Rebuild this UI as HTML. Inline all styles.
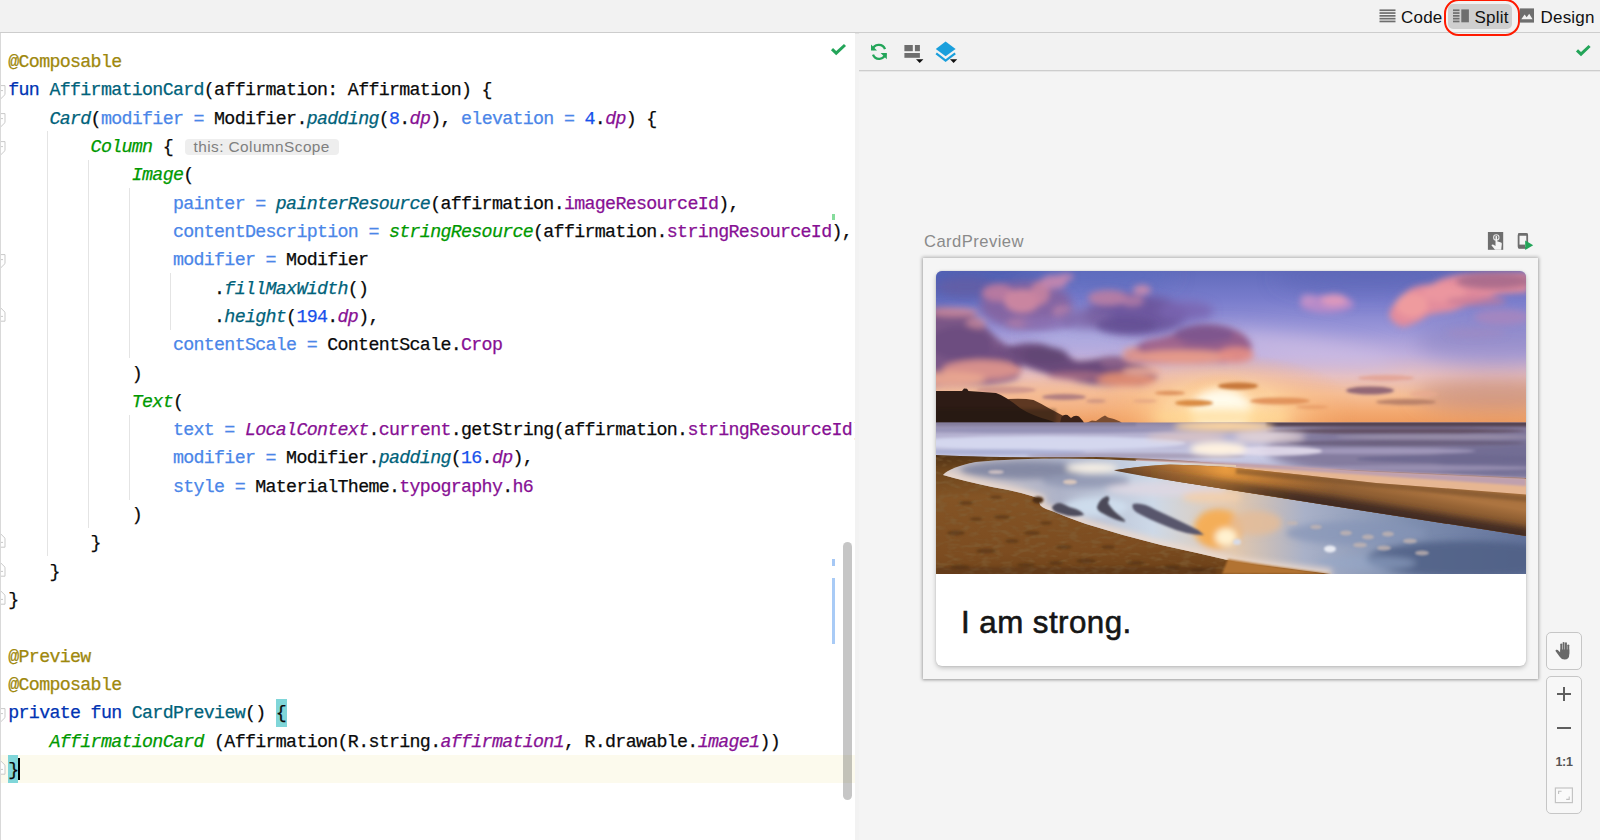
<!DOCTYPE html>
<html>
<head>
<meta charset="utf-8">
<title>Android Studio – Split</title>
<style>
html,body{margin:0;padding:0;}
body{width:1600px;height:840px;overflow:hidden;background:#f2f2f2;font-family:"Liberation Sans",sans-serif;position:relative;}
.abs{position:absolute;}
/* top bar */
#topbar{left:0;top:0;width:1600px;height:32px;background:#f2f2f2;}
#topline{left:0;top:32px;width:1600px;height:1px;background:#cdcdcd;box-shadow:0 1px 0 rgba(0,0,0,.06);}
.tab{position:absolute;top:1.8px;height:32px;font-size:17px;color:#111;line-height:32px;letter-spacing:0.2px;}
/* editor */
#editor{left:0;top:33px;width:855px;height:807px;background:#fff;overflow:hidden;}
#leftline{left:0;top:33px;width:1px;height:807px;background:#d9d9d9;}
#code{position:absolute;left:8.3px;top:15.1px;font-family:"Liberation Mono",monospace;font-size:18.3px;letter-spacing:-0.682px;line-height:28.32px;color:#0a0a0a;white-space:pre;-webkit-text-stroke:0.25px currentColor;}
#code div{height:28.32px;}
.an{color:#9e880d;}
.kw{color:#0033b3;}
.fn{color:#00627a;}
.fi{color:#00627a;font-style:italic;}
.na{color:#4a86e8;}
.nu{color:#1750eb;}
.pr{color:#871094;}
.pi{color:#871094;font-style:italic;}
.co{color:#009900;font-style:italic;}
.hint{display:inline-block;font-family:"Liberation Sans",sans-serif;font-style:normal;font-size:15.4px;letter-spacing:0.42px;-webkit-text-stroke:0;color:#7f7f7f;background:#eeeeee;border-radius:4px;height:16.6px;line-height:16.6px;padding:0 9px;vertical-align:0.2px;margin-left:1.3px;}
.guide{position:absolute;width:1px;background:#e4e4e4;}
.fold{position:absolute;left:-5px;width:9px;height:10px;border:1px solid #cfcfcf;background:#fff;border-radius:1px 1px 3px 3px;}
#curline{left:0;top:722px;width:855px;height:28px;background:#fcfaed;}
.brk{position:absolute;background:#80d6d9;}
#caret{left:18px;top:724.6px;width:2px;height:22.8px;background:#000;}
#scroll{left:842.6px;top:508.5px;width:9px;height:258.5px;background:rgba(0,0,0,.225);border-radius:4.5px;}
/* preview */
#preview{left:859px;top:33px;width:741px;height:807px;background:#f4f4f4;}
#ptool{left:859px;top:33px;width:741px;height:37px;background:#f2f2f2;}
#pline{left:859px;top:70px;width:741px;height:1px;background:#cdcdcd;box-shadow:0 1px 0 rgba(0,0,0,.05);}
#plabel{left:924px;top:231.5px;font-size:16.6px;letter-spacing:0.45px;color:#8a8a8a;line-height:20px;}
#frame{left:923px;top:258px;width:615px;height:421px;background:#f5f5f5;box-shadow:0 0 3.5px 1px rgba(0,0,0,.27), 0 1px 2px rgba(0,0,0,.12);}
#card{left:936px;top:271px;width:590px;height:395px;background:#fff;border-radius:6px;box-shadow:0 2px 5px rgba(0,0,0,.22),0 0 2px rgba(0,0,0,.12);overflow:hidden;}
#photo{position:absolute;left:0;top:0;width:590px;height:303px;}
#ctext{position:absolute;left:25px;top:331.6px;font-size:31.3px;letter-spacing:0.45px;color:#151515;line-height:40px;-webkit-text-stroke:0.6px #151515;}
.zbtn{position:absolute;left:1546px;width:34px;background:#f7f7f7;border:1px solid #c6c6c6;border-radius:5px;}
</style>
</head>
<body>
<div id="topbar" class="abs"></div>
<div id="topline" class="abs"></div>

<div id="editor" class="abs">
  <div id="curline" class="abs"></div>
  <div class="brk" style="left:276px;top:666px;width:11px;height:28px;"></div>
  <div class="brk" style="left:8px;top:722px;width:10px;height:28px;"></div>

  <div class="guide" style="left:47px;top:98px;height:425px;"></div>
  <div class="guide" style="left:88px;top:127px;height:368px;"></div>
  <div class="guide" style="left:129px;top:155px;height:170px;"></div>
  <div class="guide" style="left:129px;top:382px;height:85px;"></div>
  <div class="guide" style="left:170px;top:240px;height:57px;"></div>
  <div class="abs" style="left:832px;top:181px;width:3px;height:6px;background:#86dc9c;"></div>
  <div class="abs" style="left:832px;top:526px;width:3px;height:7px;background:#a6c8f5;"></div>
  <div class="abs" style="left:832px;top:545px;width:3px;height:66px;background:#a9cbf6;"></div>
  <svg class="abs" style="left:0;top:51.5px" width="7" height="15" viewBox="0 0 7 15"><path d="M-3 0.6 L5 0.6 L5 9.6 L0.4 14.2 L-3 14.2 Z" fill="#fff" stroke="#c9c9c9" stroke-width="1"/><path d="M0 5.6 L3 5.6" stroke="#c9c9c9" stroke-width="1"/></svg><svg class="abs" style="left:0;top:79.8px" width="7" height="15" viewBox="0 0 7 15"><path d="M-3 0.6 L5 0.6 L5 9.6 L0.4 14.2 L-3 14.2 Z" fill="#fff" stroke="#c9c9c9" stroke-width="1"/><path d="M0 5.6 L3 5.6" stroke="#c9c9c9" stroke-width="1"/></svg><svg class="abs" style="left:0;top:108.1px" width="7" height="15" viewBox="0 0 7 15"><path d="M-3 0.6 L5 0.6 L5 9.6 L0.4 14.2 L-3 14.2 Z" fill="#fff" stroke="#c9c9c9" stroke-width="1"/><path d="M0 5.6 L3 5.6" stroke="#c9c9c9" stroke-width="1"/></svg><svg class="abs" style="left:0;top:221.4px" width="7" height="15" viewBox="0 0 7 15"><path d="M-3 0.6 L5 0.6 L5 9.6 L0.4 14.2 L-3 14.2 Z" fill="#fff" stroke="#c9c9c9" stroke-width="1"/><path d="M0 5.6 L3 5.6" stroke="#c9c9c9" stroke-width="1"/></svg><svg class="abs" style="left:0;top:674.5px" width="7" height="15" viewBox="0 0 7 15"><path d="M-3 0.6 L5 0.6 L5 9.6 L0.4 14.2 L-3 14.2 Z" fill="#fff" stroke="#c9c9c9" stroke-width="1"/><path d="M0 5.6 L3 5.6" stroke="#c9c9c9" stroke-width="1"/></svg><svg class="abs" style="left:0;top:273.5px" width="7" height="15" viewBox="0 0 7 15"><path d="M-3 0.6 L0.4 0.6 L5 5.2 L5 14.2 L-3 14.2 Z" fill="#fff" stroke="#c9c9c9" stroke-width="1"/><path d="M0 9.4 L3 9.4" stroke="#c9c9c9" stroke-width="1"/></svg><svg class="abs" style="left:0;top:499.5px" width="7" height="15" viewBox="0 0 7 15"><path d="M-3 0.6 L0.4 0.6 L5 5.2 L5 14.2 L-3 14.2 Z" fill="#fff" stroke="#c9c9c9" stroke-width="1"/><path d="M0 9.4 L3 9.4" stroke="#c9c9c9" stroke-width="1"/></svg><svg class="abs" style="left:0;top:528.5px" width="7" height="15" viewBox="0 0 7 15"><path d="M-3 0.6 L0.4 0.6 L5 5.2 L5 14.2 L-3 14.2 Z" fill="#fff" stroke="#c9c9c9" stroke-width="1"/><path d="M0 9.4 L3 9.4" stroke="#c9c9c9" stroke-width="1"/></svg><svg class="abs" style="left:0;top:556.5px" width="7" height="15" viewBox="0 0 7 15"><path d="M-3 0.6 L0.4 0.6 L5 5.2 L5 14.2 L-3 14.2 Z" fill="#fff" stroke="#c9c9c9" stroke-width="1"/><path d="M0 9.4 L3 9.4" stroke="#c9c9c9" stroke-width="1"/></svg><svg class="abs" style="left:0;top:726.5px" width="7" height="15" viewBox="0 0 7 15"><path d="M-3 0.6 L0.4 0.6 L5 5.2 L5 14.2 L-3 14.2 Z" fill="#fff" stroke="#c9c9c9" stroke-width="1"/><path d="M0 9.4 L3 9.4" stroke="#c9c9c9" stroke-width="1"/></svg>
  <div id="code"><div><span class="an">@Composable</span></div><div><span class="kw">fun</span> <span class="fn">AffirmationCard</span>(affirmation: Affirmation) {</div><div>    <span class="fi">Card</span>(<span class="na">modifier =</span> Modifier.<span class="fi">padding</span>(<span class="nu">8</span>.<span class="pi">dp</span>), <span class="na">elevation =</span> <span class="nu">4</span>.<span class="pi">dp</span>) {</div><div>        <span class="co">Column</span> { <span class="hint">this: ColumnScope</span></div><div>            <span class="co">Image</span>(</div><div>                <span class="na">painter =</span> <span class="fi">painterResource</span>(affirmation.<span class="pr">imageResourceId</span>),</div><div>                <span class="na">contentDescription =</span> <span class="co">stringResource</span>(affirmation.<span class="pr">stringResourceId</span>),</div><div>                <span class="na">modifier =</span> Modifier</div><div>                    .<span class="fi">fillMaxWidth</span>()</div><div>                    .<span class="fi">height</span>(<span class="nu">194</span>.<span class="pi">dp</span>),</div><div>                <span class="na">contentScale =</span> ContentScale.<span class="pr">Crop</span></div><div>            )</div><div>            <span class="co">Text</span>(</div><div>                <span class="na">text =</span> <span class="pi">LocalContext</span>.<span class="pr">current</span>.getString(affirmation.<span class="pr">stringResourceId</span>)</div><div>                <span class="na">modifier =</span> Modifier.<span class="fi">padding</span>(<span class="nu">16</span>.<span class="pi">dp</span>),</div><div>                <span class="na">style =</span> MaterialTheme.<span class="pr">typography</span>.<span class="pr">h6</span></div><div>            )</div><div>        }</div><div>    }</div><div>}</div><div> </div><div><span class="an">@Preview</span></div><div><span class="an">@Composable</span></div><div><span class="kw">private fun</span> <span class="fn">CardPreview</span>() {</div><div>    <span class="co">AffirmationCard</span> (Affirmation(R.string.<span class="pi">affirmation1</span>, R.drawable.<span class="pi">image1</span>))</div><div>}</div></div>
  <div id="caret" class="abs"></div>
  <div id="scroll" class="abs"></div>
</div>
<div id="leftline" class="abs"></div>

<div id="preview" class="abs"></div>
<div id="ptool" class="abs"></div>
<div id="pline" class="abs"></div>
<div id="plabel" class="abs">CardPreview</div>
<div id="frame" class="abs"></div>
<div id="card" class="abs">
  <!--PHOTO--><svg id="photo" width="590" height="303" viewBox="0 0 590 303" style="position:absolute;left:0;top:0;display:block">
<defs>
 <linearGradient id="sky" x1="0" y1="0" x2="0" y2="1">
  <stop offset="0" stop-color="#626cbc"/>
  <stop offset="0.18" stop-color="#787ccc"/>
  <stop offset="0.38" stop-color="#9a96d8"/>
  <stop offset="0.54" stop-color="#bfaedc"/>
  <stop offset="0.68" stop-color="#e8c0c0"/>
  <stop offset="0.8" stop-color="#f5bf98"/>
  <stop offset="0.91" stop-color="#f3aa72"/>
  <stop offset="1" stop-color="#ee9a5c"/>
 </linearGradient>
 <radialGradient id="sun" cx="0.5" cy="0.5" r="0.5">
  <stop offset="0" stop-color="#fffef6" stop-opacity="1"/>
  <stop offset="0.2" stop-color="#fff4d4" stop-opacity=".98"/>
  <stop offset="0.45" stop-color="#ffd8a0" stop-opacity=".72"/>
  <stop offset="0.72" stop-color="#fbbd80" stop-opacity=".32"/>
  <stop offset="1" stop-color="#f5a76a" stop-opacity="0"/>
 </radialGradient>
 <linearGradient id="sea" x1="0" y1="0" x2="0" y2="1">
  <stop offset="0" stop-color="#8d83a2"/>
  <stop offset="0.2" stop-color="#b4b0cf"/>
  <stop offset="0.6" stop-color="#c8cae4"/>
  <stop offset="1" stop-color="#a59db9"/>
 </linearGradient>
 <linearGradient id="sand" x1="0" y1="0" x2="0.25" y2="1">
  <stop offset="0" stop-color="#4f3115"/>
  <stop offset="0.12" stop-color="#6d451c"/>
  <stop offset="0.35" stop-color="#845425"/>
  <stop offset="0.8" stop-color="#7c4c20"/>
  <stop offset="1" stop-color="#6e4219"/>
 </linearGradient>
 <linearGradient id="stream" x1="0" y1="0" x2="1" y2="0">
  <stop offset="0" stop-color="#cfc6c8"/>
  <stop offset="0.2" stop-color="#aeb3c8"/>
  <stop offset="0.36" stop-color="#cdd9e8"/>
  <stop offset="0.5" stop-color="#e2c8ae"/>
  <stop offset="0.62" stop-color="#a9b1c8"/>
  <stop offset="0.8" stop-color="#7f8fb0"/>
  <stop offset="1" stop-color="#62729a"/>
 </linearGradient>
 <linearGradient id="bar" gradientUnits="userSpaceOnUse" x1="400" y1="206" x2="393" y2="246">
  <stop offset="0" stop-color="#ac7440"/>
  <stop offset="0.22" stop-color="#946234"/>
  <stop offset="0.55" stop-color="#7a512e"/>
  <stop offset="0.85" stop-color="#553824"/>
  <stop offset="1" stop-color="#4a3226"/>
 </linearGradient>
 <radialGradient id="barglow" gradientUnits="userSpaceOnUse" cx="290" cy="196" r="110">
  <stop offset="0" stop-color="#f0a040" stop-opacity=".95"/>
  <stop offset="0.5" stop-color="#d88a38" stop-opacity=".5"/>
  <stop offset="1" stop-color="#c07a30" stop-opacity="0"/>
 </radialGradient>
 <filter id="b1" filterUnits="userSpaceOnUse" x="-60" y="-60" width="710" height="423"><feGaussianBlur stdDeviation="0.8"/></filter>
 <filter id="b2" filterUnits="userSpaceOnUse" x="-60" y="-60" width="710" height="423"><feGaussianBlur stdDeviation="1.8"/></filter>
 <filter id="b3" filterUnits="userSpaceOnUse" x="-60" y="-60" width="710" height="423"><feGaussianBlur stdDeviation="3"/></filter>
 <filter id="b5" filterUnits="userSpaceOnUse" x="-60" y="-60" width="710" height="423"><feGaussianBlur stdDeviation="5"/></filter>
 <filter id="b9" filterUnits="userSpaceOnUse" x="-60" y="-60" width="710" height="423"><feGaussianBlur stdDeviation="10"/></filter>
 <filter id="grain" filterUnits="userSpaceOnUse" x="0" y="180" width="590" height="123">
  <feTurbulence type="fractalNoise" baseFrequency="0.09 0.22" numOctaves="2" seed="7" result="n"/>
  <feColorMatrix in="n" type="matrix" values="0 0 0 0 0.22  0 0 0 0 0.12  0 0 0 0 0.04  0 0 0 -3.2 1.75"/>
 </filter>
 <filter id="cloudtex" filterUnits="userSpaceOnUse" x="0" y="0" width="590" height="153">
  <feTurbulence type="fractalNoise" baseFrequency="0.035 0.06" numOctaves="3" seed="11" result="n"/>
  <feColorMatrix in="n" type="matrix" values="0 0 0 0 0.36  0 0 0 0 0.24  0 0 0 0 0.46  0 0 0 -2.6 1.35"/>
  <feGaussianBlur stdDeviation="1.2"/>
 </filter>
 <clipPath id="sandclip"><path d="M0 184 Q60 187 160 186 Q240 188 300 194 L590 207 L590 303 L0 303 Z"/></clipPath>
 <clipPath id="skyclip"><rect x="0" y="0" width="590" height="152"/></clipPath>
 <clipPath id="all"><rect x="0" y="0" width="590" height="303"/></clipPath>
 <clipPath id="seaclip"><rect x="0" y="151.5" width="590" height="80"/></clipPath>
 <path id="streamPath" d="M7 204 Q14 196 40 191 Q90 186 160 188 L300 194 L300 196 Q230 192 178 199 Q210 205 244 211 Q300 220 384 233 Q480 248 590 265 L590 303 L395 303 Q340 296 300 291 Q262 282 225 274 Q188 265 150 253 Q130 246 116 240 Q100 236 104 228 Q86 221 56 216 Q28 210 7 204 Z"/>
 <linearGradient id="shadfade" gradientUnits="userSpaceOnUse" x1="200" y1="0" x2="360" y2="0"><stop offset="0" stop-color="#3b2820" stop-opacity="0"/><stop offset="1" stop-color="#3b2820" stop-opacity="1"/></linearGradient>
 <clipPath id="barclip"><path d="M178 199.5 Q206 194.5 234 193.4 Q262 194 290 196 Q360 203 440 212 L590 223.4 L590 265 Q480 248 384 233 Q300 219.6 244 211 Q206 205 178 199.5 Z"/></clipPath>
 <clipPath id="streamclip"><path d="M7 204 Q14 196 40 191 Q90 186 160 188 L300 194 L300 196 Q230 192 178 199 Q210 205 244 211 Q300 220 384 233 Q480 248 590 265 L590 303 L395 303 Q340 296 300 291 Q262 282 225 274 Q188 265 150 253 Q130 246 116 240 Q100 236 104 228 Q86 221 56 216 Q28 210 7 204 Z"/></clipPath>
</defs>
<g clip-path="url(#all)">
<!-- SKY -->
<rect x="0" y="0" width="590" height="154" fill="url(#sky)"/>
<g clip-path="url(#skyclip)">
 <g filter="url(#b9)">
  <ellipse cx="20" cy="8" rx="90" ry="26" fill="#4a5cb0" opacity=".7"/>
  <ellipse cx="160" cy="4" rx="80" ry="14" fill="#5a6cc0" opacity=".55"/>
  <ellipse cx="430" cy="6" rx="90" ry="16" fill="#5a62b4" opacity=".5"/>
  <ellipse cx="560" cy="70" rx="80" ry="24" fill="#8680c0" opacity=".5"/>
  <ellipse cx="360" cy="78" rx="100" ry="12" fill="#cdbfe6" opacity=".75" transform="rotate(8 360 78)"/>
  <ellipse cx="150" cy="64" rx="60" ry="12" fill="#b4b4e4" opacity=".7"/>
  <ellipse cx="560" cy="124" rx="80" ry="16" fill="#b98078" opacity=".6"/>
  <ellipse cx="90" cy="128" rx="110" ry="12" fill="#f4b892" opacity=".75"/>
 </g>
 <!-- sun glow -->
 <ellipse cx="287" cy="140" rx="135" ry="58" fill="url(#sun)"/>
 <ellipse cx="286" cy="142" rx="56" ry="40" fill="url(#sun)"/>
 <ellipse cx="285" cy="140" rx="30" ry="22" fill="#fffdf0" opacity=".95" filter="url(#b5)"/>
 <ellipse cx="285" cy="146" rx="70" ry="8" fill="#ffd890" opacity=".7" filter="url(#b5)"/>
 <!-- D: upper-left pink cluster -->
 <g filter="url(#b5)">
  <ellipse cx="90" cy="34" rx="46" ry="24" fill="#84629f" opacity=".9"/>
  <ellipse cx="30" cy="16" rx="30" ry="10" fill="#6a5a9c" opacity=".6"/>
 </g>
 <g filter="url(#b3)">
  <ellipse cx="62" cy="22" rx="16" ry="9" fill="#b87aa0" opacity=".95"/>
  <ellipse cx="86" cy="30" rx="18" ry="12" fill="#cf88a0" opacity=".95"/>
  <ellipse cx="104" cy="22" rx="10" ry="12" fill="#c9849f" opacity=".85"/>
  <ellipse cx="118" cy="11" rx="13" ry="7" fill="#c787ae" opacity=".9"/>
  <ellipse cx="130" cy="6" rx="8" ry="4" fill="#c888b0" opacity=".8"/>
  <ellipse cx="126" cy="40" rx="10" ry="6" fill="#b982aa" opacity=".75"/>
  <ellipse cx="84" cy="52" rx="14" ry="5" fill="#b27ea8" opacity=".7"/>
  <ellipse cx="112" cy="52" rx="26" ry="7" fill="#8a70b2" opacity=".7"/>
 </g>
 <!-- E: upper-mid purple -->
 <g filter="url(#b5)">
  <ellipse cx="200" cy="44" rx="52" ry="20" fill="#6c579d" opacity=".97"/>
  <ellipse cx="250" cy="40" rx="28" ry="10" fill="#7a64b0" opacity=".85"/>
  <ellipse cx="150" cy="48" rx="26" ry="10" fill="#7e66a6" opacity=".8"/>
 </g>
 <g filter="url(#b3)">
  <ellipse cx="172" cy="27" rx="20" ry="8" fill="#b87ea4" opacity=".92"/>
  <ellipse cx="196" cy="30" rx="12" ry="6" fill="#b07aa4" opacity=".85"/>
  <ellipse cx="206" cy="19" rx="9" ry="5" fill="#cc8cac" opacity=".9"/>
  <ellipse cx="190" cy="54" rx="30" ry="8" fill="#5f4c90" opacity=".6"/>
 </g>
 <!-- A: big left -->
 <g filter="url(#b3)">
  <path d="M-10 38 Q14 32 38 44 Q50 56 62 68 Q74 76 84 84 Q90 100 80 108 Q60 116 -10 116 Z" fill="#7a5787"/>
  <ellipse cx="18" cy="41" rx="24" ry="4.5" fill="#cc8a9e" opacity=".85"/>
  <ellipse cx="40" cy="52" rx="10" ry="6" fill="#c98a9c" opacity=".75"/>
  <ellipse cx="24" cy="72" rx="32" ry="17" fill="#6a4b7e" opacity=".8"/>
  <ellipse cx="60" cy="84" rx="16" ry="8" fill="#6a4b7e" opacity=".6"/>
  <ellipse cx="46" cy="99" rx="40" ry="10" fill="#dc948c" opacity=".95"/>
  <ellipse cx="14" cy="108" rx="36" ry="7" fill="#eaa890" opacity=".95"/>
 </g>
 <!-- B: long diagonal -->
 <g filter="url(#b3)">
  <path d="M68 78 Q86 70 106 73 Q124 78 140 90 Q156 90 170 86 Q186 84 196 90 Q214 96 222 106 Q214 115 196 115 Q160 116 130 108 Q100 100 80 92 Z" fill="#694a7a"/>
  <ellipse cx="110" cy="84" rx="22" ry="8" fill="#5f4474" opacity=".7"/>
  <ellipse cx="190" cy="108" rx="30" ry="7" fill="#e08c72" opacity=".95"/>
  <ellipse cx="140" cy="105" rx="28" ry="4" fill="#b07084" opacity=".8"/>
  <ellipse cx="178" cy="92" rx="14" ry="5" fill="#9a6a90" opacity=".7"/>
 </g>
 <!-- C: centre -->
 <g filter="url(#b3)">
  <path d="M188 90 Q196 74 212 69 Q236 66 250 56 Q270 50 292 56 Q312 62 316 76 Q312 92 280 92 Q240 94 188 92 Z" fill="#955f8c"/>
  <ellipse cx="268" cy="63" rx="30" ry="9" fill="#7c558e" opacity=".9"/>
  <ellipse cx="228" cy="74" rx="20" ry="6" fill="#a66a8e" opacity=".7"/>
  <ellipse cx="246" cy="86" rx="52" ry="7" fill="#e89c8a" opacity=".95"/>
  <ellipse cx="300" cy="84" rx="18" ry="8" fill="#e48e84" opacity=".9"/>
  <ellipse cx="206" cy="100" rx="20" ry="5" fill="#f0b09a" opacity=".8"/>
  <ellipse cx="196" cy="84" rx="10" ry="8" fill="#e0988e" opacity=".8"/>
 </g>
 <!-- right big pink -->
 <g filter="url(#b3)">
  <path d="M453 43 Q457 31 470 21 Q478 14 496 13 Q506 6 524 4 L592 2 L592 21 Q574 22 562 23 Q544 30 516 40 Q500 42 492 44 Q482 52 467 56 Q455 53 453 43 Z" fill="#e38c9c"/>
  <ellipse cx="476" cy="34" rx="16" ry="12" fill="#f09c9e" opacity=".9"/>
  <ellipse cx="508" cy="22" rx="22" ry="9" fill="#ec98a0" opacity=".8"/>
  <ellipse cx="540" cy="30" rx="30" ry="5" fill="#c67a98" opacity=".7"/>
 </g>
 <g filter="url(#b3)">
  <ellipse cx="558" cy="10" rx="38" ry="8" fill="#a2688a" opacity=".85"/>
  <ellipse cx="566" cy="46" rx="28" ry="8" fill="#ac84ba" opacity=".7"/>
  <ellipse cx="540" cy="62" rx="30" ry="5" fill="#a48ac0" opacity=".5"/>
  <ellipse cx="391" cy="33" rx="27" ry="9" fill="#c08cc8" opacity=".85"/>
  <ellipse cx="398" cy="29" rx="13" ry="6" fill="#e29aba" opacity=".9"/>
  <ellipse cx="372" cy="28" rx="8" ry="5" fill="#c894c8" opacity=".7"/>
 </g>
 <!-- horizon streak clouds -->
 <g filter="url(#b2)">
  <ellipse cx="302" cy="115" rx="20" ry="3.4" fill="#c8783a"/>
  <ellipse cx="258" cy="132" rx="19" ry="3.2" fill="#d98a42"/>
  <ellipse cx="234" cy="122" rx="15" ry="2.2" fill="#da8c56" opacity=".9"/>
  <ellipse cx="344" cy="130" rx="30" ry="3.4" fill="#e0905a" opacity=".95"/>
  <ellipse cx="434" cy="119.5" rx="24" ry="4" fill="#8c6274" opacity=".95"/>
  <ellipse cx="470" cy="131" rx="30" ry="3" fill="#b07a64" opacity=".85"/>
  <ellipse cx="450" cy="107" rx="28" ry="3" fill="#e2a090" opacity=".8"/>
  <ellipse cx="488" cy="123" rx="14" ry="3" fill="#e8aa90" opacity=".7"/>
  <ellipse cx="128" cy="126" rx="22" ry="3" fill="#a8787e" opacity=".9"/>
  <ellipse cx="160" cy="130" rx="10" ry="2" fill="#c89080" opacity=".8"/>
  <ellipse cx="209" cy="130" rx="12" ry="1.8" fill="#e2a482" opacity=".8"/>
  <ellipse cx="70" cy="119" rx="30" ry="3.4" fill="#c48a88" opacity=".7"/>
  <ellipse cx="376" cy="136" rx="16" ry="1.8" fill="#e29460" opacity=".7"/>
 </g>
 <!-- headland -->
 <path d="M72 128 Q88 127 97.5 129 Q106 133 112.5 137 Q120 141 127.5 145 L132 152 L80 152 Z" fill="#5e3822"/>
 <path d="M0 120 L26 120 L28 117.6 L31 117.8 L32.5 120 L60 122 Q66 124 71 127.5 Q78 132 84 137 Q90 141 97.5 144 Q106 147.5 112.5 149 L121 152 L0 152 Z" fill="#2d1b15"/>
 <path d="M124 152 L125.5 146 Q128 143 131.5 144 L135 147 Q139 143.5 143 145.5 L147 150 L148 152 Z" fill="#3b2218"/>
 <path d="M150 152 L156 149.5 L160 150 L166 146 L169 144.6 L172 146.5 L178 148 L184 150.5 L186 152 Z" fill="#7a4c30"/>
 <rect x="0" y="138" width="120" height="14" fill="#1e120e" opacity=".35" filter="url(#b2)"/>
</g>
<!-- SEA -->
<rect x="0" y="151.5" width="590" height="60" fill="url(#sea)"/>
<g clip-path="url(#seaclip)">
 <g filter="url(#b5)">
  <ellipse cx="500" cy="178" rx="170" ry="30" fill="#7d7498" opacity=".9"/>
  <ellipse cx="590" cy="190" rx="90" ry="20" fill="#6c6890" opacity=".7"/>
 </g>
 <g filter="url(#b2)">
  <rect x="0" y="150.5" width="200" height="4" fill="#7d7896" opacity=".8"/>
  <rect x="330" y="150.5" width="270" height="5" fill="#4f3d4b"/>
  <ellipse cx="460" cy="160" rx="130" ry="2.6" fill="#5e4a5c" opacity=".9"/>
  <ellipse cx="500" cy="166" rx="100" ry="2.4" fill="#9a8ea8" opacity=".8"/>
  <ellipse cx="470" cy="172" rx="120" ry="3" fill="#665a78" opacity=".8"/>
  <ellipse cx="430" cy="180" rx="110" ry="3" fill="#a79fc0" opacity=".8"/>
  <ellipse cx="520" cy="188" rx="100" ry="4" fill="#6d688f" opacity=".85"/>
  <ellipse cx="480" cy="197" rx="120" ry="3" fill="#9b92b4" opacity=".8"/>
  <ellipse cx="110" cy="159" rx="130" ry="2.6" fill="#8b8ab2" opacity=".7"/>
  <ellipse cx="110" cy="172" rx="140" ry="7" fill="#d8dcf2" opacity=".85"/>
  <ellipse cx="340" cy="180" rx="46" ry="5" fill="#e6dfee" opacity=".85"/>
  <ellipse cx="60" cy="181" rx="90" ry="3" fill="#a4aad2" opacity=".7"/>
  <ellipse cx="200" cy="185" rx="110" ry="3" fill="#9f93ae" opacity=".75"/>
 </g>
 <g filter="url(#b3)">
  <ellipse cx="288" cy="155" rx="50" ry="5" fill="#ffd7a0"/>
  <ellipse cx="282" cy="178" rx="28" ry="7" fill="#fff2e0"/>
  <ellipse cx="334" cy="166" rx="36" ry="6" fill="#f0ddd8" opacity=".7"/>
  <ellipse cx="250" cy="166" rx="40" ry="4" fill="#f1cfbe" opacity=".6"/>
 </g>
</g>
<!-- BEACH base (sand) -->
<path d="M0 184 Q60 187 160 186 Q240 188 300 194 L590 207 L590 303 L0 303 Z" fill="url(#sand)"/>
<g clip-path="url(#sandclip)"><rect x="0" y="180" width="590" height="123" filter="url(#grain)" opacity=".55"/></g>
<!-- wet sand band at right -->
<path d="M200 189 Q300 192 420 200 L590 208 L590 226 L440 213 L290 197 Q240 192 200 191 Z" fill="#e6b692"/>
<path d="M200 188 Q300 191 420 199 L590 207 L590 215 Q420 203 300 195.5 Q240 191.5 200 190 Z" fill="#bfa0ae" filter="url(#b1)"/>
<!-- stream -->
<path d="M7 204 Q14 196 40 191 Q90 186 160 188 L300 194 L300 196 Q230 192 178 199 Q210 205 244 211 Q300 220 384 233 Q480 248 590 265 L590 303 L395 303 Q340 296 300 291 Q262 282 225 274 Q188 265 150 253 Q130 246 116 240 Q100 236 104 228 Q86 221 56 216 Q28 210 7 204 Z" fill="url(#stream)"/>
<g clip-path="url(#streamclip)">
 <g filter="url(#b3)">
  <path d="M7 204 Q28 210 56 216 Q86 221 104 228 Q100 236 116 240 L150 253 L225 274 L300 291 L395 303" fill="none" stroke="#ecd9cc" stroke-width="9" opacity=".95"/>
  <ellipse cx="86" cy="199" rx="62" ry="9" fill="#8288a2" opacity=".95"/>
  <ellipse cx="150" cy="210" rx="44" ry="7" fill="#9299b4" opacity=".9"/>
  <ellipse cx="156" cy="197" rx="26" ry="5" fill="#f6efe4"/>
  <ellipse cx="230" cy="218" rx="60" ry="7" fill="#ddd7e2" opacity=".9"/>
  <ellipse cx="160" cy="236" rx="32" ry="10" fill="#cfdfee" opacity=".9"/>
  <ellipse cx="276" cy="226" rx="30" ry="6" fill="#f2cfae" opacity=".9"/>
  <ellipse cx="282" cy="258" rx="24" ry="20" fill="#f4ae58"/>
  <ellipse cx="290" cy="266" rx="11" ry="9" fill="#fff2d0"/>
  <ellipse cx="320" cy="252" rx="26" ry="12" fill="#e4bc98" opacity=".85"/>
  <ellipse cx="420" cy="262" rx="70" ry="12" fill="#8494b6" opacity=".7"/>
  <ellipse cx="530" cy="288" rx="100" ry="18" fill="#4f5f85" opacity=".85"/>
  <ellipse cx="430" cy="292" rx="50" ry="7" fill="#94a6c6" opacity=".6"/>
 </g>
 <g filter="url(#b1)" fill="#c6b6b0" opacity=".75">
  <ellipse cx="410" cy="262" rx="6" ry="2.4"/><ellipse cx="432" cy="266" rx="6" ry="2.4"/><ellipse cx="452" cy="263" rx="6" ry="2.4"/>
  <ellipse cx="424" cy="274" rx="7" ry="2.6"/><ellipse cx="448" cy="277" rx="7" ry="2.6"/><ellipse cx="474" cy="270" rx="7" ry="2.6"/>
  <ellipse cx="486" cy="282" rx="7" ry="2.6"/><ellipse cx="380" cy="256" rx="6" ry="2.2"/><ellipse cx="356" cy="252" rx="6" ry="2"/>
 </g>
</g>
<!-- rocks in stream -->
<g filter="url(#b1)">
 <path d="M116 236 Q121 230 127 233 Q132 236 140 238 Q147 241 148 244 Q136 247 126 243 Q116 241 116 236 Z" fill="#4f4d5d"/>
 <path d="M161 236 Q163 228 171 225 Q175 226 172 232 Q176 239 184 245 Q190 249 189 251 Q176 248 168 243 Q161 240 161 236 Z" fill="#4c4a58"/>
 <path d="M197 233 Q206 231 220 239 Q244 250 262 259 L268 264 Q250 264 230 255 Q210 247 200 241 Q195 237 197 233 Z" fill="#58566c"/>
 <ellipse cx="102" cy="229" rx="5.5" ry="3.4" fill="#4c2d15"/>
 <ellipse cx="134" cy="211" rx="7" ry="2.4" fill="#d9c6bc"/>
 <ellipse cx="60" cy="201" rx="8" ry="2" fill="#c8bcc0"/>
 <ellipse cx="394" cy="278" rx="6" ry="3.4" fill="#e8eaf2"/>
 <ellipse cx="301" cy="271" rx="4" ry="3" fill="#d8dae6"/>
</g>
<!-- sandbar -->
<path id="barPath" d="M178 199.5 Q206 194.5 234 193.4 Q262 194 290 196 Q360 203 440 212 L590 223.4 L590 265 Q480 248 384 233 Q300 219.6 244 211 Q206 205 178 199.5 Z" fill="url(#bar)"/>
<path d="M178 199.5 Q206 194.5 234 193.4 Q262 194 290 196 Q360 203 440 212 L590 223.4 L590 265 Q480 248 384 233 Q300 219.6 244 211 Q206 205 178 199.5 Z" fill="url(#barglow)"/>
<g clip-path="url(#barclip)">
 <path d="M200 205 Q300 221 384 234 Q480 249 592 267" fill="none" stroke="url(#shadfade)" stroke-width="20" opacity=".85" filter="url(#b3)"/>
 <path d="M300 200 Q420 212 592 228" fill="none" stroke="#6e4826" stroke-width="6" opacity=".5" filter="url(#b2)"/>
</g>
<!-- bottom sand patch right of stream -->
<path d="M286 303 L292 288 Q340 296 396 303 Z" fill="#b27330" filter="url(#b1)"/>
<!-- sand speckles -->
<g fill="#4e2f12" opacity=".5" filter="url(#b1)">
 <ellipse cx="30" cy="232" rx="7" ry="2"/><ellipse cx="66" cy="246" rx="8" ry="2"/><ellipse cx="20" cy="262" rx="9" ry="2.4"/>
 <ellipse cx="96" cy="262" rx="8" ry="2"/><ellipse cx="50" cy="280" rx="10" ry="2.4"/><ellipse cx="128" cy="276" rx="8" ry="2"/>
 <ellipse cx="150" cy="290" rx="10" ry="2.4"/><ellipse cx="90" cy="294" rx="9" ry="2"/><ellipse cx="200" cy="292" rx="9" ry="2"/>
 <ellipse cx="24" cy="296" rx="10" ry="2.2"/><ellipse cx="172" cy="276" rx="7" ry="2"/><ellipse cx="236" cy="296" rx="8" ry="2"/>
 <ellipse cx="60" cy="226" rx="6" ry="1.6"/><ellipse cx="110" cy="252" rx="6" ry="1.8"/><ellipse cx="40" cy="248" rx="6" ry="1.8"/>
 <ellipse cx="76" cy="270" rx="7" ry="2"/><ellipse cx="120" cy="292" rx="7" ry="2"/><ellipse cx="262" cy="299" rx="7" ry="1.8"/>
</g>
<rect x="0" y="296" width="280" height="8" fill="#3a2412" opacity=".25" filter="url(#b2)"/>
</g>
</svg>
<!--/PHOTO-->
  <div id="ctext">I am strong.</div>
</div>

<div class="zbtn" style="top:632px;height:36px;"></div>
<div class="zbtn" style="top:676px;height:136px;"></div>

<!-- top-right tabs -->
<svg class="abs" style="left:1379px;top:9px" width="17" height="14" viewBox="0 0 17 14"><g fill="#6e6e6e"><rect x="0.5" y="0.4" width="16" height="1.7"/><rect x="0.5" y="3.2" width="16" height="1.7"/><rect x="0.5" y="6.0" width="16" height="1.7"/><rect x="0.5" y="8.8" width="16" height="1.7"/><rect x="0.5" y="11.6" width="16" height="1.7"/></g></svg>
<div class="tab" style="left:1401px;">Code</div>
<div class="abs" style="left:1448px;top:4px;width:64px;height:25px;background:#cfcfcf;border-radius:5px;"></div>
<svg class="abs" style="left:1453px;top:9px" width="17" height="14" viewBox="0 0 17 14"><g fill="#6e6e6e"><rect x="0" y="0.4" width="6.5" height="1.7"/><rect x="0" y="3.2" width="6.5" height="1.7"/><rect x="0" y="6.0" width="6.5" height="1.7"/><rect x="0" y="8.8" width="6.5" height="1.7"/><rect x="0" y="11.6" width="6.5" height="1.7"/><rect x="8.3" y="0.4" width="7.6" height="12.9"/></g></svg>
<div class="tab" style="left:1474.5px;">Split</div>
<div class="abs" style="left:1444.2px;top:-0.6px;width:72px;height:32.6px;border:2.5px solid #ff1a00;border-radius:14.5px;box-sizing:content-box;"></div>
<svg class="abs" style="left:1519px;top:8px" width="16" height="15" viewBox="0 0 16 15"><rect x="0.8" y="0.4" width="14.2" height="14.2" fill="#6e6e6e"/><path d="M2.3 11.2 L5.6 6.6 L7.7 9.2 L10.2 5.8 L13.6 11.2 Z" fill="#f2f2f2"/></svg>
<div class="tab" style="left:1540.5px;">Design</div>

<!-- editor check -->
<svg class="abs" style="left:830px;top:43px" width="17" height="13" viewBox="0 0 17 13"><path d="M2 6.2 L6.2 10.2 L15 2" fill="none" stroke="#23a559" stroke-width="3"/></svg>
<!-- preview check -->
<svg class="abs" style="left:1575px;top:44px" width="17" height="13" viewBox="0 0 17 13"><path d="M2 6.4 L6 10.2 L14.6 2" fill="none" stroke="#23a559" stroke-width="3"/></svg>

<!-- preview toolbar icons -->
<svg class="abs" style="left:869px;top:42px" width="20" height="20" viewBox="0 0 20 20">
 <g fill="none" stroke="#23a559" stroke-width="2.3">
  <path d="M3.4 8.0 A6.6 6.6 0 0 1 16.0 7.2"/>
  <path d="M16.6 11.6 A6.6 6.6 0 0 1 4.0 12.6"/>
 </g>
 <path d="M2.0 2.6 L2.0 8.6 L8.0 8.6 Z" fill="#23a559"/>
 <path d="M17.8 17.2 L17.8 11.0 L11.6 11.0 Z" fill="#23a559"/>
</svg>
<svg class="abs" style="left:904px;top:44px" width="22" height="21" viewBox="0 0 22 21"><g fill="#6e6e6e"><rect x="0.4" y="1.0" width="8.4" height="6.2"/><rect x="10.9" y="1.0" width="5" height="6.2"/><rect x="0.4" y="9.0" width="15.5" height="4.8"/></g><path d="M12 15.2 L19.4 15.2 L15.7 19 Z" fill="#111"/></svg>
<svg class="abs" style="left:934px;top:40px" width="26" height="25" viewBox="0 0 26 25"><path d="M11.6 1.4 L21.6 9 L11.6 16.3 L1.8 9 Z" fill="#1a9fdc"/><path d="M2.2 13.4 L11.6 20.6 L21.2 13.4" fill="none" stroke="#1a9fdc" stroke-width="2.2"/><path d="M16 19.2 L23.2 19.2 L19.6 23 Z" fill="#111"/></svg>

<!-- preview label icons -->
<svg class="abs" style="left:1487px;top:231px" width="18" height="20" viewBox="0 0 18 20"><rect x="0.9" y="1" width="15.3" height="17.8" fill="#6e6e6e"/><circle cx="9.3" cy="6.4" r="2.7" fill="none" stroke="#e6e6e6" stroke-width="1.1"/><path d="M8.5 5.2 Q9.3 4.4 10.1 5.2 L10.1 10.2 L14 11.6 Q15 12 14.8 13.2 L14.2 18.8 L8 18.8 L4.4 14.2 Q5.2 13 6.6 13.8 L8.5 15 Z" fill="#f4f4f4"/></svg>
<svg class="abs" style="left:1516px;top:232px" width="19" height="19" viewBox="0 0 19 19"><rect x="2.6" y="1.9" width="8.6" height="14" rx="1.3" fill="none" stroke="#6e6e6e" stroke-width="1.8"/><rect x="2" y="12.6" width="7" height="3.6" fill="#6e6e6e"/><rect x="2" y="1.2" width="9.8" height="2.6" rx="1" fill="#6e6e6e"/><path d="M9.2 8.6 L17.2 13.2 L9.2 17.9 Z" fill="#23a559"/></svg>

<!-- zoom buttons contents -->
<svg class="abs" style="left:1554px;top:640px" width="20" height="22" viewBox="0 0 20 22"><g fill="#696969"><rect x="6.3" y="3.4" width="1.9" height="10" rx=".95"/><rect x="8.65" y="1.9" width="1.9" height="11" rx=".95"/><rect x="11" y="2.3" width="1.9" height="11" rx=".95"/><rect x="13.35" y="4.4" width="1.9" height="10" rx=".95"/><path d="M6.3 9.6 L15.25 9.6 L15.25 14.6 Q15.25 19.6 10.6 19.6 Q7.4 19.6 5.7 16.8 L1.7 11.3 Q1.1 10.3 2.1 9.8 Q3 9.4 3.8 10.1 L6.3 12.4 Z"/></g></svg>
<div class="abs" style="left:1557px;top:693px;width:14px;height:2.2px;background:#5e5e5e;"></div>
<div class="abs" style="left:1562.9px;top:687px;width:2.2px;height:14px;background:#5e5e5e;"></div>
<div class="abs" style="left:1557px;top:727px;width:14px;height:2.2px;background:#5e5e5e;"></div>
<div class="abs" style="left:1546px;top:753px;width:36px;text-align:center;font-size:12.5px;font-weight:bold;color:#555;line-height:18px;letter-spacing:-0.3px;">1:1</div>
<svg class="abs" style="left:1554px;top:787px" width="20" height="17" viewBox="0 0 20 17"><rect x="1.4" y="1" width="17" height="14.6" fill="#fafafa" stroke="#c4c4c4" stroke-width="1.2"/><path d="M4.6 7 L4.6 4.2 L7.6 4.2 M15.2 9.6 L15.2 12.4 L12.2 12.4" fill="none" stroke="#c0c0c0" stroke-width="1.1"/></svg>
</body>
</html>
